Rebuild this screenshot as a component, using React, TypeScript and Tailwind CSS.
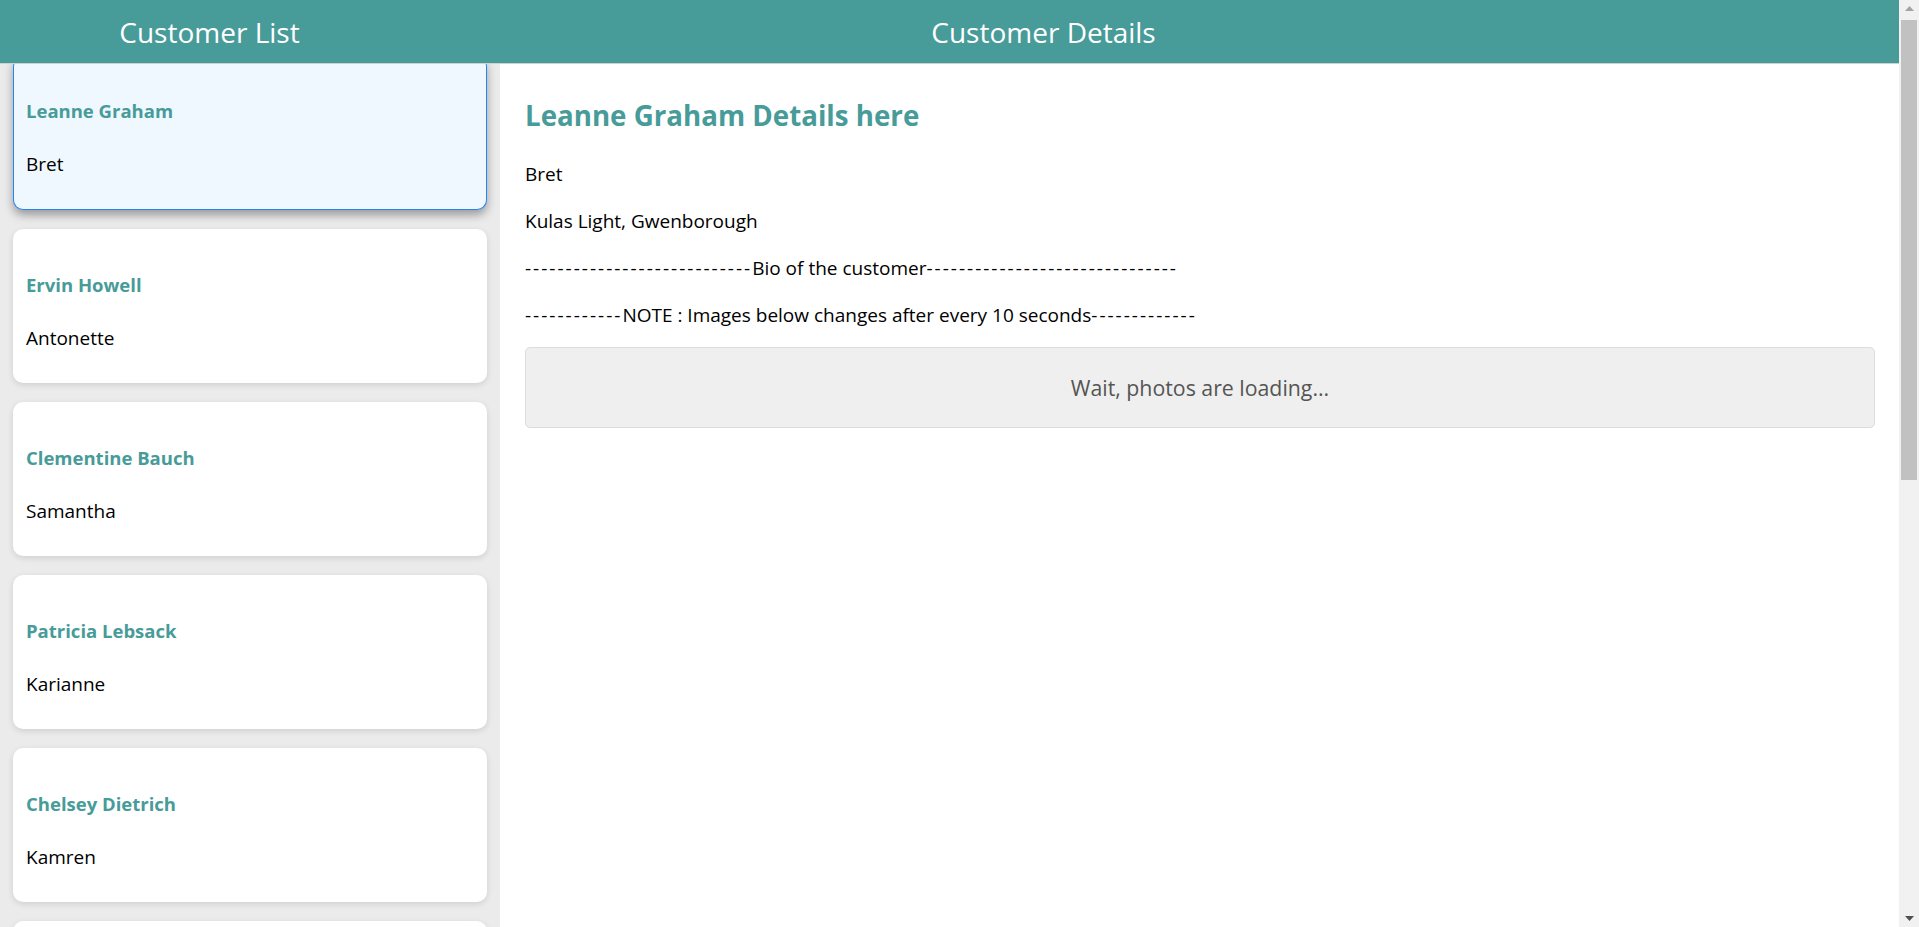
import React from "react";

const users = [
  ["Leanne Graham", "Bret"],
  ["Ervin Howell", "Antonette"],
  ["Clementine Bauch", "Samantha"],
  ["Patricia Lebsack", "Karianne"],
  ["Chelsey Dietrich", "Kamren"],
  ["Mrs. Dennis Schulist", "Leopoldo_Corkery"],
];

function Dashes({ n }: { n: number }) {
  return <span className="tracking-[2px]">{"-".repeat(n)}</span>;
}

export default function App() {
  return (
    <div
      className="flex h-screen overflow-hidden bg-white text-black"
      style={{ fontFamily: '"Open Sans", "Noto Sans", sans-serif' }}
    >
      <div className="flex min-w-0 flex-1 flex-col">
        <header className="relative z-10 flex h-[64px] shrink-0 items-center border-b border-[#cfcfcf] bg-[#479b99] text-white">
          <div className="w-[419px] text-center text-[28px] leading-[36px]">Customer List</div>
          <div className="w-[1249px] text-center text-[28px] leading-[36px]">Customer Details</div>
        </header>
        <div className="flex min-h-0 flex-1">
          <aside className="flex w-[500px] shrink-0 flex-col gap-[19px] bg-[#ebebeb] px-[13px] pb-[19px]">
            {users.map(([name, user], i) => (
              <div
                key={name}
                className={
                  i === 0
                    ? "-mt-[8px] h-[154px] shrink-0 rounded-[10px] border-x border-b border-[#2584f7] bg-[#f0f8ff] px-[12px] pt-[41px] shadow-[0_5px_10px_rgba(0,0,0,0.35)]"
                    : "h-[154px] shrink-0 rounded-[10px] bg-white px-[13px] pt-[42px] shadow-[0_2px_6px_rgba(0,0,0,0.12)]"
                }
              >
                <div className="text-[18.5px] font-bold leading-[27px] text-[#479b99]">{name}</div>
                <div className="mt-[27px] text-[19px] leading-[27px]">{user}</div>
              </div>
            ))}
          </aside>
          <main className="flex-1 pl-[25px] pr-[24px]">
            <h2 className="mt-[33px] text-[27.7px] font-bold leading-[36px] text-[#479b99]">
              Leanne Graham Details here
            </h2>
            <div className="mt-[28px] flex flex-col gap-[20px] text-[19px] leading-[27px]">
              <p>Bret</p>
              <p>Kulas Light, Gwenborough</p>
              <p>
                <Dashes n={28} />
                Bio of the customer
                <Dashes n={31} />
              </p>
              <p>
                <Dashes n={12} />
                NOTE : Images below changes after every 10 seconds
                <Dashes n={13} />
              </p>
            </div>
            <div className="mt-[18px] flex h-[81px] items-center justify-center rounded-[5px] border border-[#dcdcdc] bg-[#efefef] text-[21.3px] text-[#555]">
              Wait, photos are loading...
            </div>
          </main>
        </div>
      </div>
      <div className="flex w-[20px] shrink-0 flex-col bg-[#f1f1f1]">
        <div className="flex h-[17px] shrink-0 items-center justify-center">
          <svg width="9" height="5" viewBox="0 0 9 5">
            <polygon points="4.5,0 9,5 0,5" fill="#a3a3a3" />
          </svg>
        </div>
        <div className="mx-[2px] mt-[3px] h-[460px] bg-[#c1c1c1]" />
        <div className="flex-1" />
        <div className="flex h-[17px] shrink-0 items-center justify-center">
          <svg width="9" height="5" viewBox="0 0 9 5">
            <polygon points="0,0 9,0 4.5,5" fill="#505050" />
          </svg>
        </div>
      </div>
    </div>
  );
}
